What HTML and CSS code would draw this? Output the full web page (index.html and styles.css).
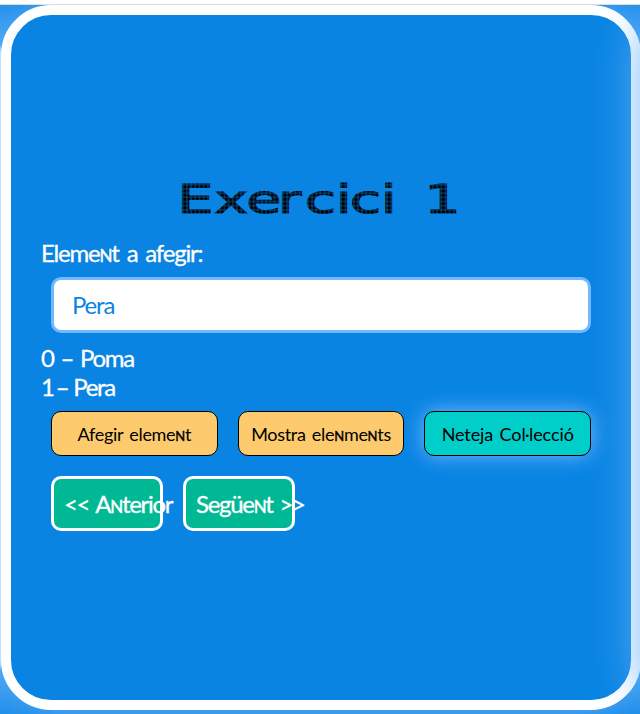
FILE: index.html
```
<!DOCTYPE html>
<html lang="ca">
<head>
<meta charset="utf-8">
<title>Exercici 1</title>
<link rel="stylesheet" href="styles.css">
</head>
<body>
<main class="slider">
  <div class="card"></div>
  <section class="card">
    <h1 class="title">
      <svg width="320" height="50" viewBox="0 0 320 50">
        <defs>
          <pattern id="dots" width="2.876" height="4.17" patternUnits="userSpaceOnUse" x="15" y="9.8">
            <rect class="gap" width="3" height="5"/>
            <rect class="dot" x=".35" y=".5" width="2.2" height="3.2"/>
          </pattern>
        </defs>
        <text y="38.5" transform="scale(1.45 1)" x="11.2 36.7 58.8 80.5 99.1 120.5 130.2 151.5 164.5 181.5">Exercici 1</text>
      </svg>
    </h1>
    <label class="label" for="item">Eleme<span class="sc">n</span>t a afegir:</label>
    <input class="field" id="item" value="Pera">
    <div class="list"><div>0 – Poma</div><div><span class="one">1</span> – Pera</div></div>
    <div class="actions">
      <button class="btn">Afegir eleme<span class="sc">n</span>t</button>
      <button class="btn">Mostra ele<span class="sc">n</span>me<span class="sc">n</span>ts</button>
      <button class="btn active">Neteja Col·lecció</button>
    </div>
    <nav class="nav">
      <button class="step">&lt;&lt; A<span class="sc">n</span>terior</button>
      <button class="step">Següe<span class="sc">n</span>t &gt;&gt;</button>
    </nav>
  </section>
  <div class="card"></div>
</main>
</body>
</html>
```
FILE: styles.css
```
* { box-sizing: border-box; }
body {
  margin: 0;
  padding-top: 4px;
  height: 714px;
  overflow: hidden;
  background: #fff;
  font-family: Lato, sans-serif;
}
.slider {
  display: flex;
  justify-content: center;
  width: 642px;
  height: 710px;
  border-top: 1px solid #dadce0;
  background: #0984e3;
  overflow: hidden;
}
.card {
  flex: 0 0 640px;
  height: 705px;
  padding: 160px 30px 0;
  border: 10px solid #fff;
  border-radius: 50px;
  background: #0984e3;
  box-shadow: 0 0 50px #74b9ff;
  color: #fff;
}
.title { margin: 0 0 0 120px; height: 64px; }
.title svg { display: block; overflow: visible; }
.title text {
  font: 39.5px "DejaVu Sans", sans-serif;
  fill: url(#dots);
  stroke: url(#dots);
  stroke-width: 1.1;
}
.gap { fill: #064b82; }
.dot { fill: #000; }
.label, .list {
  display: block;
  font-size: 24px;
  line-height: 29px;
  letter-spacing: -1.3px;
  word-spacing: 2px;
  -webkit-text-stroke: .3px;
}
.label { line-height: 27px; letter-spacing: -1.2px; word-spacing: 3px; }
.one { letter-spacing: -4px; }
.sc { font-variant: small-caps; -webkit-text-stroke: .4px; }
.field {
  display: block;
  width: 540px;
  height: 56px;
  margin: 11px 10px 10px;
  padding: 0 18px 2px;
  border: 3px solid #74b9ff;
  border-radius: 10px;
  background: #fff;
  color: #0984e3;
  font: 24px Lato, sans-serif;
  letter-spacing: -1.2px;
}
.list > :last-child { word-spacing: 0; }
.actions { display: flex; gap: 20px; margin: 10px; }
.btn {
  flex: 1;
  height: 45px;
  padding: 0;
  border: 1px solid #000;
  border-radius: 10px;
  background: #fdcb6e;
  font: 18px Lato, sans-serif;
  letter-spacing: -.3px;
  word-spacing: 2px;
  color: #000;
  white-space: nowrap;
}
.active { background: #00cec9; box-shadow: 0 0 20px #74b9ff; letter-spacing: -.1px; }
.nav { display: flex; gap: 20px; margin: 20px 10px; }
.step {
  width: 112px;
  height: 55px;
  padding: 0 10px;
  border: 3px solid #fff;
  border-radius: 10px;
  background: #00b894;
  color: #fff;
  font: 24px Lato, sans-serif;
  letter-spacing: -1.3px;
  word-spacing: 2px;
  -webkit-text-stroke: .3px;
  text-align: left;
  white-space: nowrap;
}
```
